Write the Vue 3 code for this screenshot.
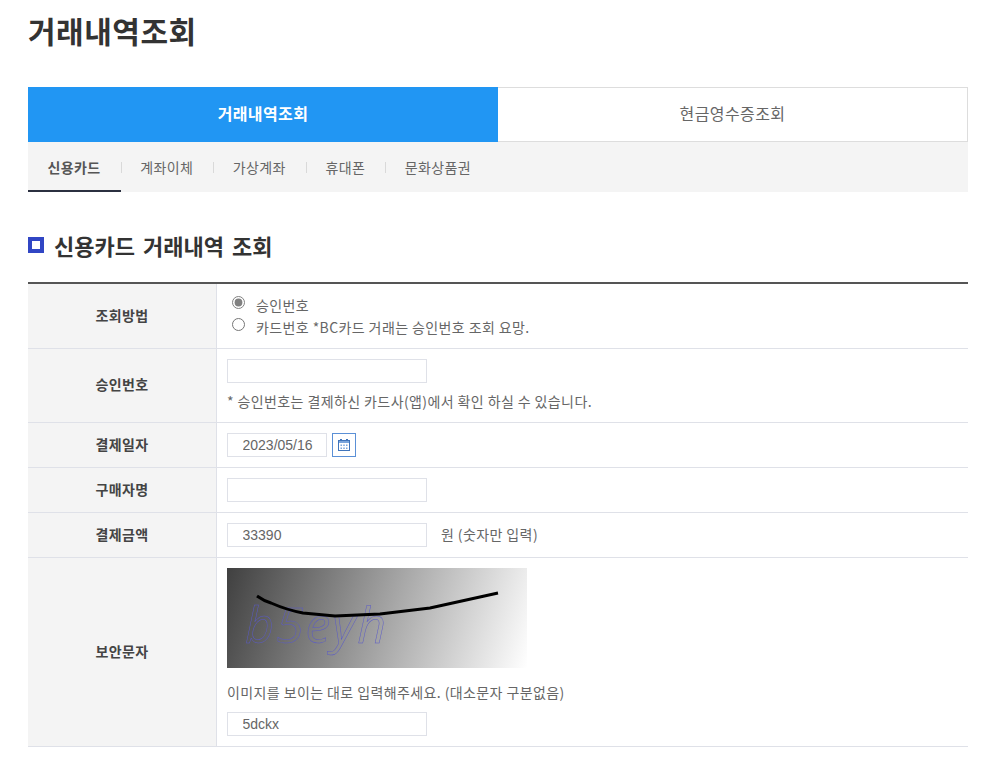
<script setup>
const subs = ['신용카드', '계좌이체', '가상계좌', '휴대폰', '문화상품권']
</script>

<template>
  <div class="page">
    <h1 class="title">거래내역조회</h1>

    <div class="tabs">
      <div class="tab active">거래내역조회</div>
      <div class="tab">현금영수증조회</div>
    </div>

    <ul class="subs">
      <li v-for="(s, i) in subs" :key="s" class="sub" :class="{ on: i === 0 }">{{ s }}</li>
    </ul>

    <h2 class="section"><span class="mark"></span>신용카드 거래내역 조회</h2>

    <table class="form">
      <tbody>
        <tr class="r1">
          <th>조회방법</th>
          <td>
            <label class="radio"><input type="radio" name="m" checked /><span>승인번호</span></label>
            <label class="radio"><input type="radio" name="m" /><span>카드번호 *BC카드 거래는 승인번호 조회 요망.</span></label>
          </td>
        </tr>
        <tr class="r2">
          <th>승인번호</th>
          <td>
            <input class="field" type="text" />
            <p class="note">* 승인번호는 결제하신 카드사(앱)에서 확인 하실 수 있습니다.</p>
          </td>
        </tr>
        <tr class="r3">
          <th>결제일자</th>
          <td>
            <div class="line">
              <input class="field date" type="text" value="2023/05/16" />
              <button class="cal" type="button" aria-label="달력">
                <svg width="14" height="14" viewBox="0 0 14 14">
                  <path fill="#7aa5dc" d="M1 2h12v3H1z" />
                  <path fill="#3f74bb" d="M3 1h2v2H3zM9 1h2v2H9z" />
                  <rect x="1.500" y="2.500" width="11" height="10" fill="none" stroke="#3f74bb" />
                  <path fill="#7aa5dc" d="M3.500 6.500h1.500v1.500H3.500zM6.250 6.500h1.500v1.500h-1.500zM9 6.500h1.500v1.500H9zM3.500 9.500h1.500v1.500H3.500zM6.250 9.500h1.500v1.500h-1.500zM9 9.500h1.500v1.500H9z" />
                </svg>
              </button>
            </div>
          </td>
        </tr>
        <tr class="r3">
          <th>구매자명</th>
          <td><input class="field" type="text" /></td>
        </tr>
        <tr class="r3">
          <th>결제금액</th>
          <td>
            <div class="line">
              <input class="field" type="text" value="33390" />
              <span class="unit">원 (숫자만 입력)</span>
            </div>
          </td>
        </tr>
        <tr class="r6">
          <th>보안문자</th>
          <td class="top">
            <svg class="captcha" width="300" height="100" viewBox="0 0 300 100">
              <defs>
                <linearGradient id="cg" x1="0" y1="0" x2="300" y2="100" gradientUnits="userSpaceOnUse">
                  <stop offset="0" stop-color="#404040" />
                  <stop offset="1" stop-color="#ffffff" />
                </linearGradient>
              </defs>
              <rect width="300" height="100" fill="url(#cg)" />
              <text x="18" y="75" class="cap-text">b5eyh</text>
              <path d="M30 28 Q37 33 44 35 Q60 42 76 45 L108 48 L153 46 L203 40 L271 25" fill="none" stroke="#000" stroke-width="3" />
            </svg>
            <p class="hint">이미지를 보이는 대로 입력해주세요. (대소문자 구분없음)</p>
            <input class="field" type="text" value="5dckx" />
          </td>
        </tr>
      </tbody>
    </table>
  </div>
</template>

<style scoped>
.page {
  width: 940px;
  padding: 0 16px 0 28px;
  font-family: "Noto Sans CJK KR", "Noto Sans", "Liberation Sans", sans-serif;
  color: #666;
  font-size: 14px;
  letter-spacing: 0.4px;
}
.title {
  margin: 0;
  height: 87px;
  padding-top: 9px;
  box-sizing: border-box;
  font-size: 30px;
  line-height: 42px;
  font-weight: 700;
  color: #333;
  letter-spacing: 0.5px;
}
.tabs {
  display: flex;
  height: 55px;
}
.tab {
  flex: 1;
  display: flex;
  align-items: center;
  justify-content: center;
  box-sizing: border-box;
  padding-bottom: 3px;
  font-size: 16px;
  color: #666;
  border: 1px solid #ddd;
  border-left: 0;
}
.tab.active {
  background: #2196f3;
  border: 0;
  color: #fff;
  font-weight: 700;
  flex: 0 0 470px;
}
.subs {
  display: flex;
  list-style: none;
  margin: 0;
  padding: 0;
  height: 50px;
  background: #f4f4f4;
}
.sub {
  position: relative;
  display: flex;
  align-items: center;
  box-sizing: border-box;
  height: 50px;
  padding: 0 20px 0 19.500px;
  font-size: 14px;
  color: #666;
}
.sub + .sub::before {
  content: "";
  position: absolute;
  left: 0;
  top: 20px;
  width: 1px;
  height: 11px;
  background: #d9d9d9;
}
.sub.on {
  font-weight: 700;
  color: #555;
  border-bottom: 2px solid #2b3040;
  padding-top: 2px;
}
.section {
  display: flex;
  align-items: center;
  margin: 0;
  height: 90px;
  padding-top: 18px;
  padding-bottom: 2px;
  box-sizing: border-box;
  font-size: 22px;
  font-weight: 700;
  color: #333;
  letter-spacing: 0;
  word-spacing: 3px;
}
.mark {
  box-sizing: border-box;
  width: 16px;
  height: 16px;
  border: 4px solid #3146c4;
  margin-right: 10px;
}
.form {
  width: 940px;
  border-collapse: collapse;
  table-layout: fixed;
  border-top: 2px solid #555;
}
th {
  width: 188px;
  background: #f4f4f4;
  border-bottom: 1px solid #dfe1e8;
  border-right: 1px solid #dfe1e8;
  font-size: 14px;
  font-weight: 700;
  color: #444;
  padding: 0 0 2px;
}
td {
  padding: 0 10px;
  border-bottom: 1px solid #dfe1e8;
  vertical-align: middle;
}
td.top {
  vertical-align: top;
  padding-top: 10px;
}
.r1 { height: 65px; }
.r2 { height: 74px; }
.r3 { height: 45px; }
.r6 { height: 189px; }
.radio {
  display: flex;
  align-items: center;
  height: 22px;
  padding-left: 5px;
}
.radio input {
  margin: 0 11px 0 0;
  width: 13px;
  height: 13px;
  position: relative;
  top: -2px;
  accent-color: #808080;
}
.field {
  display: block;
  box-sizing: border-box;
  width: 200px;
  height: 24px;
  border: 1px solid #dfe1e8;
  padding: 0 0 0 14.500px;
  font-family: "Liberation Sans", sans-serif;
  font-size: 14px;
  color: #666;
  background: #fff;
  outline: none;
}
.field.date { width: 100px; }
.line {
  display: flex;
  align-items: center;
}
.cal {
  box-sizing: border-box;
  width: 24px;
  height: 24px;
  margin-left: 5px;
  padding: 0;
  display: flex;
  align-items: center;
  justify-content: center;
  background: #fff;
  border: 1px solid #5b90d6;
}
.unit { margin-left: 14px; position: relative; top: -1px; }
.note {
  margin: 8px 0 0;
  line-height: 20px;
}
.captcha {
  display: block;
}
.cap-text {
  font-family: "Open Sans", "Noto Sans", sans-serif;
  font-style: italic;
  font-size: 50px;
  letter-spacing: 2px;
  fill: none;
  stroke: #5a5ac8;
  stroke-width: 0.5;
}
.hint {
  margin: 14px 0 10px;
  line-height: 20px;
}
</style>
<style>
body { margin: 0; background: #fff; }
</style>
